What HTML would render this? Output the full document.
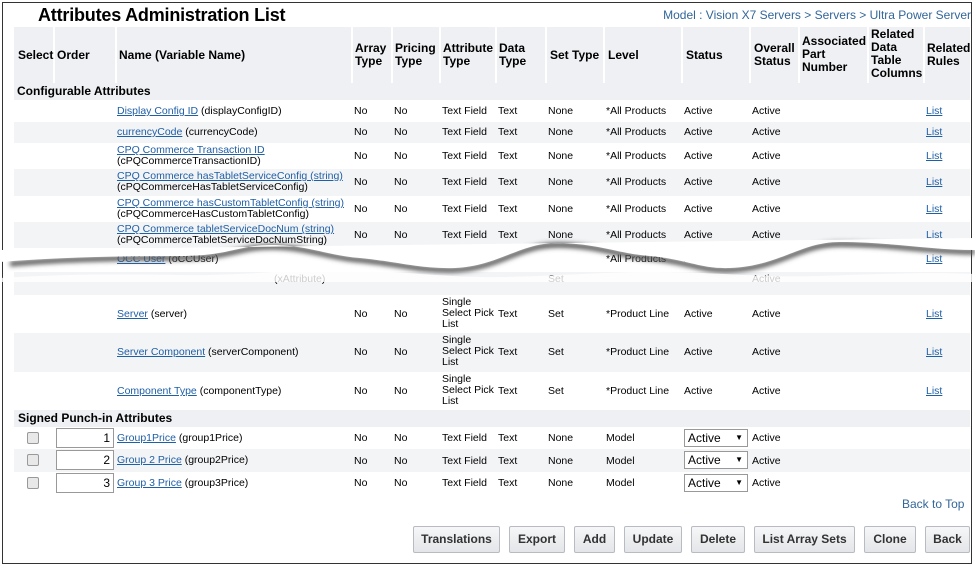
<!DOCTYPE html>
<html><head><meta charset="utf-8"><style>
*{margin:0;padding:0;box-sizing:border-box}
body{width:975px;height:566px;background:#fff;font-family:"Liberation Sans",Arial,sans-serif;font-size:10.5px;color:#000;position:relative;overflow:hidden}
.frame{position:absolute;left:2px;top:2px;width:970px;height:562px;border:1px solid #333}
.title{position:absolute;left:38px;top:5px;font-size:18px;font-weight:bold;letter-spacing:-0.2px}
.crumb{position:absolute;right:4px;top:8px;font-size:12px;color:#336699}
.row{position:absolute;left:14px;width:956px}
.c{position:absolute;white-space:nowrap;line-height:11px}
a{color:#1f5fa6;text-decoration:underline}
.hd{background:#eef0f3;top:27px;height:56px;font-weight:bold;font-size:12px}
.hd .c{line-height:13px}
.sep{position:absolute;top:0;bottom:0;width:2px;background:#fff}
.g{background:#f3f4f6}
.sec{background:#eef0f3;font-weight:bold;font-size:12px}
.btn{position:absolute;top:526px;height:27px;border:1px solid #b8bcc2;background:linear-gradient(#f6f7f8,#e3e5e8);font-weight:bold;font-size:12px;color:#333;text-align:center;line-height:25px;border-radius:2px}
.cb{position:absolute;left:13px;width:12px;height:12px;border:1px solid #999;border-radius:2px;background:#e8e8e8}
.inp{position:absolute;left:42px;width:58px;height:20px;border:1px solid #999;background:#fff;text-align:right;padding-right:3px;font-size:12px;line-height:18px}
.sel{position:absolute;left:670px;width:64px;height:18px;border:1px solid #999;background:#fff;font-size:12px;padding-left:3px;line-height:16px}
.sel:after{content:"▼";position:absolute;right:4px;font-size:8px}
</style></head><body>
<div class="frame"></div>
<div class="title">Attributes Administration List</div>
<div class="crumb">Model : Vision X7 Servers &gt; Servers &gt; Ultra Power Server</div>

<div class="row hd">
<div class="sep" style="left:39px"></div><div class="sep" style="left:101px"></div><div class="sep" style="left:337px"></div><div class="sep" style="left:377px"></div><div class="sep" style="left:425px"></div><div class="sep" style="left:481px"></div><div class="sep" style="left:531px"></div><div class="sep" style="left:589px"></div><div class="sep" style="left:667px"></div><div class="sep" style="left:735px"></div><div class="sep" style="left:784px"></div><div class="sep" style="left:853px"></div><div class="sep" style="left:909px"></div>
<div class="c" style="left:4px;top:22px">Select</div>
<div class="c" style="left:43px;top:22px">Order</div>
<div class="c" style="left:105px;top:22px">Name (Variable Name)</div>
<div class="c" style="left:341px;top:15px">Array<br>Type</div>
<div class="c" style="left:381px;top:15px">Pricing<br>Type</div>
<div class="c" style="left:429px;top:15px">Attribute<br>Type</div>
<div class="c" style="left:485px;top:15px">Data<br>Type</div>
<div class="c" style="left:536px;top:22px">Set Type</div>
<div class="c" style="left:594px;top:22px">Level</div>
<div class="c" style="left:672px;top:22px">Status</div>
<div class="c" style="left:740px;top:15px">Overall<br>Status</div>
<div class="c" style="left:788px;top:8px">Associated<br>Part<br>Number</div>
<div class="c" style="left:857px;top:1px">Related<br>Data<br>Table<br>Columns</div>
<div class="c" style="left:913px;top:15px">Related<br>Rules</div>
</div>

<div class="row sec" style="top:83px;height:17px"><div class="c" style="left:3px;top:3px">Configurable Attributes</div></div>

<div class="row" style="top:101px;height:21px"><div class="c" style="left:103px;top:5px"><a>Display Config ID</a> (displayConfigID)</div></div>
<div class="row g" style="top:122px;height:21px"><div class="c" style="left:103px;top:5px"><a>currencyCode</a> (currencyCode)</div></div>
<div class="row" style="top:143px;height:26px"><div class="c" style="left:103px;top:2px"><a>CPQ Commerce Transaction ID</a><br>(cPQCommerceTransactionID)</div></div>
<div class="row g" style="top:169px;height:27px"><div class="c" style="left:103px;top:2px"><a>CPQ Commerce hasTabletServiceConfig (string)</a><br>(cPQCommerceHasTabletServiceConfig)</div></div>
<div class="row" style="top:196px;height:26px"><div class="c" style="left:103px;top:2px"><a>CPQ Commerce hasCustomTabletConfig (string)</a><br>(cPQCommerceHasCustomTabletConfig)</div></div>
<div class="row g" style="top:222px;height:26px"><div class="c" style="left:103px;top:2px"><a>CPQ Commerce tabletServiceDocNum (string)</a><br>(cPQCommerceTabletServiceDocNumString)</div></div>
<div class="row" style="top:248px;height:24px"><div class="c" style="left:103px;top:6px"><a>OCC User</a> (oCCUser)</div><div class="c" style="left:380px;top:6px">No</div><div class="c" style="left:428px;top:6px">Boolean</div><div class="c" style="left:592px;top:6px">*All Products</div><div class="c" style="left:670px;top:6px">Active</div><div class="c" style="left:912px;top:6px"><a>List</a></div></div>
<div class="row g" style="top:272px;height:23px"><div class="c" style="left:260px;top:2px">(xAttribute)</div><div class="c" style="left:534px;top:2px">Set</div><div class="c" style="left:738px;top:2px">Active</div></div>

<div class="row" style="top:295px;height:38px"><div class="c" style="left:103px;top:14px"><a>Server</a> (server)</div></div>
<div class="row g" style="top:333px;height:39px"><div class="c" style="left:103px;top:14px"><a>Server Component</a> (serverComponent)</div></div>
<div class="row" style="top:372px;height:38px"><div class="c" style="left:103px;top:14px"><a>Component Type</a> (componentType)</div></div>

<div class="row sec" style="top:410px;height:17px"><div class="c" style="left:4px;top:3px">Signed Punch-in Attributes</div></div>

<div class="row" style="top:427px;height:22px"><div class="cb" style="top:5px"></div><div class="inp" style="top:1px">1</div><div class="c" style="left:103px;top:6px"><a>Group1Price</a> (group1Price)</div><div class="sel" style="top:2px">Active</div></div>
<div class="row g" style="top:449px;height:23px"><div class="cb" style="top:5px"></div><div class="inp" style="top:1px">2</div><div class="c" style="left:103px;top:6px"><a>Group 2 Price</a> (group2Price)</div><div class="sel" style="top:2px">Active</div></div>
<div class="row" style="top:472px;height:22px"><div class="cb" style="top:5px"></div><div class="inp" style="top:1px">3</div><div class="c" style="left:103px;top:6px"><a>Group 3 Price</a> (group3Price)</div><div class="sel" style="top:2px">Active</div></div>

<div style="position:absolute;left:0;top:0">
<div class="c" style="left:354px;top:106px">No</div><div class="c" style="left:394px;top:106px">No</div><div class="c" style="left:442px;top:106px">Text Field</div><div class="c" style="left:498px;top:106px">Text</div><div class="c" style="left:548px;top:106px">None</div><div class="c" style="left:606px;top:106px">*All Products</div><div class="c" style="left:684px;top:106px">Active</div><div class="c" style="left:752px;top:106px">Active</div><div class="c" style="left:926px;top:106px"><a>List</a></div>
<div class="c" style="left:354px;top:127px">No</div><div class="c" style="left:394px;top:127px">No</div><div class="c" style="left:442px;top:127px">Text Field</div><div class="c" style="left:498px;top:127px">Text</div><div class="c" style="left:548px;top:127px">None</div><div class="c" style="left:606px;top:127px">*All Products</div><div class="c" style="left:684px;top:127px">Active</div><div class="c" style="left:752px;top:127px">Active</div><div class="c" style="left:926px;top:127px"><a>List</a></div>
<div class="c" style="left:354px;top:151px">No</div><div class="c" style="left:394px;top:151px">No</div><div class="c" style="left:442px;top:151px">Text Field</div><div class="c" style="left:498px;top:151px">Text</div><div class="c" style="left:548px;top:151px">None</div><div class="c" style="left:606px;top:151px">*All Products</div><div class="c" style="left:684px;top:151px">Active</div><div class="c" style="left:752px;top:151px">Active</div><div class="c" style="left:926px;top:151px"><a>List</a></div>
<div class="c" style="left:354px;top:177px">No</div><div class="c" style="left:394px;top:177px">No</div><div class="c" style="left:442px;top:177px">Text Field</div><div class="c" style="left:498px;top:177px">Text</div><div class="c" style="left:548px;top:177px">None</div><div class="c" style="left:606px;top:177px">*All Products</div><div class="c" style="left:684px;top:177px">Active</div><div class="c" style="left:752px;top:177px">Active</div><div class="c" style="left:926px;top:177px"><a>List</a></div>
<div class="c" style="left:354px;top:204px">No</div><div class="c" style="left:394px;top:204px">No</div><div class="c" style="left:442px;top:204px">Text Field</div><div class="c" style="left:498px;top:204px">Text</div><div class="c" style="left:548px;top:204px">None</div><div class="c" style="left:606px;top:204px">*All Products</div><div class="c" style="left:684px;top:204px">Active</div><div class="c" style="left:752px;top:204px">Active</div><div class="c" style="left:926px;top:204px"><a>List</a></div>
<div class="c" style="left:354px;top:230px">No</div><div class="c" style="left:394px;top:230px">No</div><div class="c" style="left:442px;top:230px">Text Field</div><div class="c" style="left:498px;top:230px">Text</div><div class="c" style="left:548px;top:230px">None</div><div class="c" style="left:606px;top:230px">*All Products</div><div class="c" style="left:684px;top:230px">Active</div><div class="c" style="left:752px;top:230px">Active</div><div class="c" style="left:926px;top:230px"><a>List</a></div>

<div class="c" style="left:354px;top:309px">No</div><div class="c" style="left:394px;top:309px">No</div><div class="c" style="left:442px;top:297px">Single<br>Select Pick<br>List</div><div class="c" style="left:498px;top:309px">Text</div><div class="c" style="left:548px;top:309px">Set</div><div class="c" style="left:606px;top:309px">*Product Line</div><div class="c" style="left:684px;top:309px">Active</div><div class="c" style="left:752px;top:309px">Active</div><div class="c" style="left:926px;top:309px"><a>List</a></div>
<div class="c" style="left:354px;top:347px">No</div><div class="c" style="left:394px;top:347px">No</div><div class="c" style="left:442px;top:335px">Single<br>Select Pick<br>List</div><div class="c" style="left:498px;top:347px">Text</div><div class="c" style="left:548px;top:347px">Set</div><div class="c" style="left:606px;top:347px">*Product Line</div><div class="c" style="left:684px;top:347px">Active</div><div class="c" style="left:752px;top:347px">Active</div><div class="c" style="left:926px;top:347px"><a>List</a></div>
<div class="c" style="left:354px;top:386px">No</div><div class="c" style="left:394px;top:386px">No</div><div class="c" style="left:442px;top:374px">Single<br>Select Pick<br>List</div><div class="c" style="left:498px;top:386px">Text</div><div class="c" style="left:548px;top:386px">Set</div><div class="c" style="left:606px;top:386px">*Product Line</div><div class="c" style="left:684px;top:386px">Active</div><div class="c" style="left:752px;top:386px">Active</div><div class="c" style="left:926px;top:386px"><a>List</a></div>

<div class="c" style="left:354px;top:433px">No</div><div class="c" style="left:394px;top:433px">No</div><div class="c" style="left:442px;top:433px">Text Field</div><div class="c" style="left:498px;top:433px">Text</div><div class="c" style="left:548px;top:433px">None</div><div class="c" style="left:606px;top:433px">Model</div><div class="c" style="left:752px;top:433px">Active</div>
<div class="c" style="left:354px;top:456px">No</div><div class="c" style="left:394px;top:456px">No</div><div class="c" style="left:442px;top:456px">Text Field</div><div class="c" style="left:498px;top:456px">Text</div><div class="c" style="left:548px;top:456px">None</div><div class="c" style="left:606px;top:456px">Model</div><div class="c" style="left:752px;top:456px">Active</div>
<div class="c" style="left:354px;top:478px">No</div><div class="c" style="left:394px;top:478px">No</div><div class="c" style="left:442px;top:478px">Text Field</div><div class="c" style="left:498px;top:478px">Text</div><div class="c" style="left:548px;top:478px">None</div><div class="c" style="left:606px;top:478px">Model</div><div class="c" style="left:752px;top:478px">Active</div>
</div>

<!-- tear: wave y(x) pts (svg top=230): (0,32)(90,27)(180,26)(270,15)(360,28)(450,38)(560,13)(650,26)(730,38)(840,12)(975,20) -->
<svg style="position:absolute;left:0;top:230px" width="975" height="70">
<defs><filter id="b" x="-5%" y="-50%" width="110%" height="200%"><feGaussianBlur stdDeviation="2.5"/></filter></defs>
<path d="M10,34 C60,29 120,28 180,28 C230,28 240,16 275,17 C310,18 330,28 360,30 C400,34 420,41 455,40 C500,38 520,14 560,15 C600,16 620,26 650,28 C690,32 700,41 730,40 C780,38 800,14 840,14 C890,14 930,22 975,22" fill="none" stroke="#555" stroke-width="5" filter="url(#b)"/>
<path d="M0,20 L975,8 L975,20 C930,20 890,12 840,12 C800,12 780,36 730,38 C700,39 690,30 650,26 C620,24 600,14 560,13 C520,12 500,36 455,38 C420,39 400,32 360,28 C330,26 310,16 275,15 C240,14 230,26 180,26 C120,26 60,27 0,32 Z" fill="#fff"/>
<path d="M0,48 C60,44 120,44 180,45 C240,46 280,40 330,40 C400,40 440,48 500,47 C560,46 600,42 650,42 C720,42 760,48 820,46 C880,44 930,42 975,44 L975,52 L0,52 Z" fill="#fff" opacity="0.8"/>
</svg>

<div class="c" style="left:902px;top:499px;color:#336699;font-size:12px">Back to Top</div>

<div class="btn" style="left:413px;width:87px">Translations</div>
<div class="btn" style="left:509px;width:56px">Export</div>
<div class="btn" style="left:574px;width:41px">Add</div>
<div class="btn" style="left:624px;width:58px">Update</div>
<div class="btn" style="left:691px;width:54px">Delete</div>
<div class="btn" style="left:754px;width:101px">List Array Sets</div>
<div class="btn" style="left:864px;width:52px">Clone</div>
<div class="btn" style="left:925px;width:45px">Back</div>
</body></html>
